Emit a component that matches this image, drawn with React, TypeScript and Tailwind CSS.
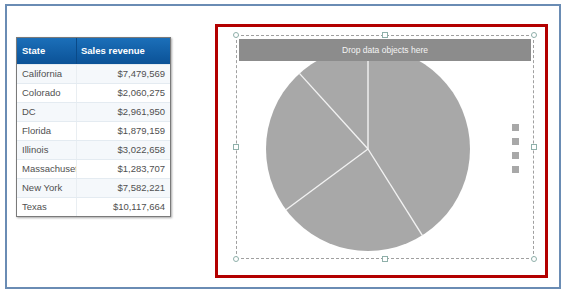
import React from "react";

const ROWS: [string, string][] = [
  ["California", "$7,479,569"],
  ["Colorado", "$2,060,275"],
  ["DC", "$2,961,950"],
  ["Florida", "$1,879,159"],
  ["Illinois", "$3,022,658"],
  ["Massachusetts", "$1,283,707"],
  ["New York", "$7,582,221"],
  ["Texas", "$10,117,664"],
];

// pie slice edges, relative to centre (r = 102)
const EDGES: [number, number][] = [
  [0, -102],
  [-68.6, -75.6],
  [-82, 60.7],
  [54.3, 86.4],
];

function Handle({ x, y, round }: { x: number; y: number; round?: boolean }) {
  return (
    <div
      className={`absolute h-[6px] w-[6px] border border-[#8fb0aa] bg-white ${round ? "rounded-full" : ""}`}
      style={{ left: x - 3, top: y - 3 }}
    />
  );
}

function SalesTable() {
  return (
    <div className="w-[155px] border border-[#7a7a7a] bg-white shadow-[1px_1px_2px_rgba(0,0,0,0.35)]">
      <div className="flex h-[26px] items-center bg-gradient-to-b from-[#1b6fb9] to-[#0b5297] text-[9.5px] font-bold text-white">
        <div className="flex h-full w-[60px] items-center border-r border-[#0a4a88] pl-[5px]">State</div>
        <div className="pl-[4px]">Sales revenue</div>
      </div>
      {ROWS.map(([state, rev], i) => (
        <div
          key={state}
          className={`flex h-[19px] items-center border-t border-[#e4ebf1] text-[9.5px] text-[#505050] ${i % 2 === 0 ? "bg-[#f5f8fb]" : "bg-white"}`}
        >
          <div className="flex h-full w-[60px] items-center overflow-hidden whitespace-nowrap border-r border-[#e9eef2] pl-[5px]">
            {state}
          </div>
          <div className="flex-1 pr-[5px] text-right">{rev}</div>
        </div>
      ))}
    </div>
  );
}

function PieChart() {
  const cx = 131;
  const cy = 113;
  return (
    <div className="relative ml-[18px] mt-[8px] h-[224px] w-[298px] border border-dashed border-[#a0a0a0]">
      <svg width={296} height={222} className="absolute left-0 top-0">
        <circle cx={cx} cy={cy} r={102} fill="#a8a8a8" />
        {EDGES.map(([dx, dy], i) => (
          <line key={i} x1={cx} y1={cy} x2={cx + dx} y2={cy + dy} stroke="#f2f2f2" strokeWidth={1.4} />
        ))}
        {[88, 102, 116, 130].map((y) => (
          <rect key={y} x={275} y={y} width={7} height={7} fill="#a8a8a8" />
        ))}
      </svg>
      <div className="absolute left-[2px] right-[2px] top-[3px] flex h-[22px] items-center justify-center bg-[#8c8c8c] text-[8.5px] text-[#f4f4f4]">
        Drop data objects here
      </div>
      <Handle x={-1} y={-1} round />
      <Handle x={148} y={-1} />
      <Handle x={297} y={-1} round />
      <Handle x={-1} y={111} />
      <Handle x={297} y={111} />
      <Handle x={-1} y={223} round />
      <Handle x={148} y={223} />
      <Handle x={297} y={223} round />
    </div>
  );
}

export default function App() {
  return (
    <div className="h-[291px] w-[565px] overflow-hidden bg-white font-['Liberation_Sans',Arial,sans-serif]">
      {/* heading cut off above the frame: only descenders show */}
      <div className="-mt-[13px] h-[15px] pl-[22px] text-[13px] font-bold leading-[12px] text-black">Changing display</div>
      <div className="ml-[5px] mt-[2px] flex h-[285px] w-[556px] border-2 border-[#6a8cb4]">
        <div className="ml-[9px] mt-[31px]">
          <SalesTable />
        </div>
        <div className="ml-[44px] mt-[18px] h-[254px] w-[333px] border-[3px] border-[#b30000]">
          <PieChart />
        </div>
      </div>
    </div>
  );
}
